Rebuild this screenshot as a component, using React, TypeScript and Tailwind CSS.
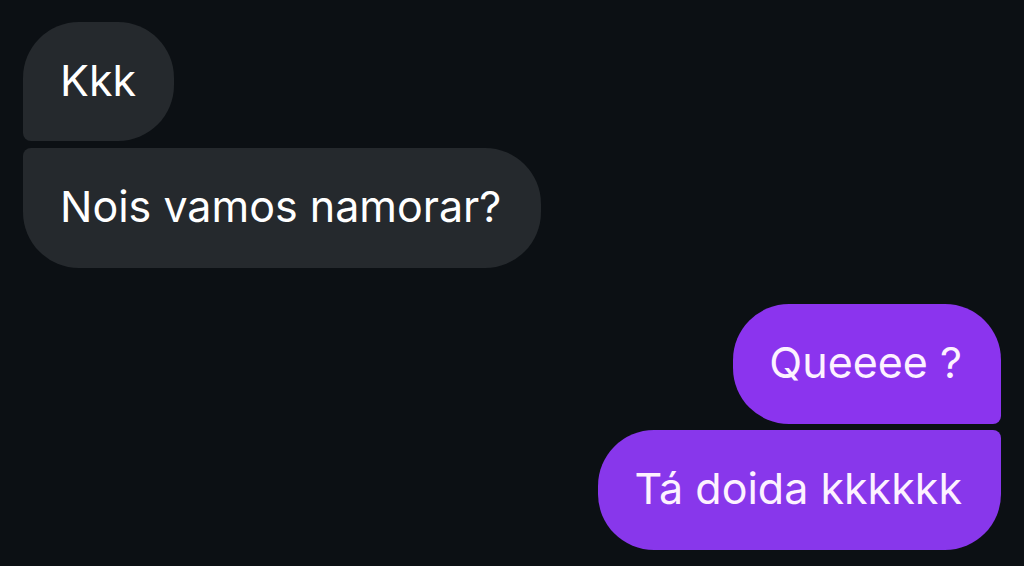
import React from "react";

const font = { fontFamily: "Inter, 'Noto Sans', sans-serif" };

export default function App() {
  return (
    <div
      className="w-[1024px] h-[566px] bg-[#0c1014] overflow-hidden flex flex-col pt-[22px] px-[23px] text-[43px] leading-[50px]"
      style={font}
    >
      {/* incoming messages */}
      <div className="flex flex-col items-start gap-[7px]">
        <div className="h-[119px] flex items-center pb-[4px] pl-[37px] pr-[38px] bg-[#25292d] text-white rounded-[56px] rounded-bl-[8px]">
          Kkk
        </div>
        <div className="h-[120px] flex items-center pb-[4px] pl-[37px] pr-[40px] bg-[#25292d] text-white rounded-[56px] rounded-tl-[8px]">
          Nois vamos namorar?
        </div>
      </div>

      {/* outgoing messages */}
      <div className="flex flex-col items-end gap-[6px] mt-[36px]">
        <div className="h-[120px] flex items-center pb-[4px] pl-[36px] pr-[39px] bg-[#8b34ee] text-[#fdf2ff] rounded-[56px] rounded-br-[8px]">
          Queeee ?
        </div>
        <div className="h-[120px] flex items-center pb-[4px] pl-[36px] pr-[39px] bg-[#8837eb] text-[#fdf2ff] rounded-[56px] rounded-tr-[8px]">
          Tá doida kkkkkk
        </div>
      </div>
    </div>
  );
}
